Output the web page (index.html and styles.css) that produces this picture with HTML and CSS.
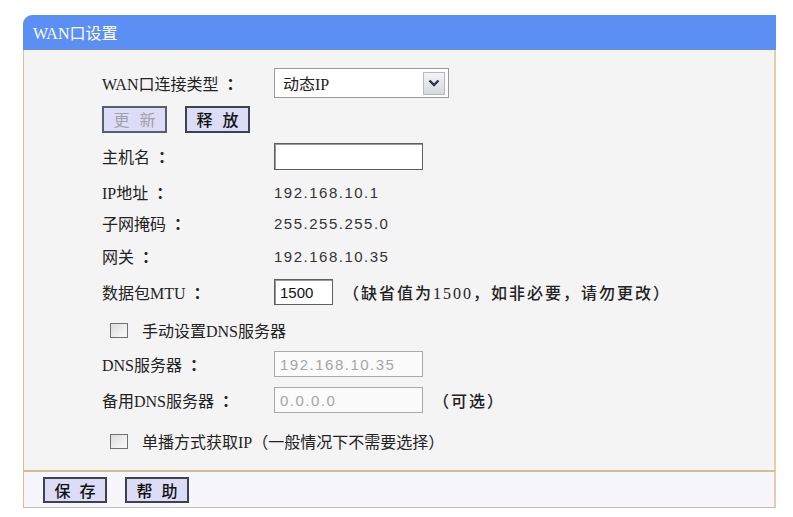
FILE: index.html
```html
<!DOCTYPE html>
<html lang="zh-CN">
<head>
<meta charset="utf-8">
<title>WAN口设置</title>
<link rel="stylesheet" href="styles.css">
</head>
<body>
<div class="panel">
  <div class="panel-head">WAN口设置</div>
  <div class="panel-body">
    <div class="form">
      <div class="label">WAN口连接类型<span class="colon">：</span></div>
      <div class="value">
        <div class="select">
          <span>动态IP</span>
          <span class="select-btn">
            <svg width="12" height="8" viewBox="0 0 12 8"><path d="M1.5 1.5 L6 6 L10.5 1.5" fill="none" stroke="#2a3450" stroke-width="2.4"/></svg>
          </span>
        </div>
      </div>

      <div class="btn-row">
        <span class="btn disabled">更新</span>
        <span class="btn">释放</span>
      </div>

      <div class="label">主机名<span class="colon">：</span></div>
      <div class="value"><span class="input wide"></span></div>

      <div class="label">IP地址<span class="colon">：</span></div>
      <div class="value num">192.168.10.1</div>

      <div class="label">子网掩码<span class="colon">：</span></div>
      <div class="value num">255.255.255.0</div>

      <div class="label">网关<span class="colon">：</span></div>
      <div class="value num">192.168.10.35</div>

      <div class="label">数据包MTU<span class="colon">：</span></div>
      <div class="value">
        <span class="input mtu">1500</span>
        <span class="hint">（缺省值为1500，如非必要，请勿更改）</span>
      </div>

      <div class="check-row">
        <span class="checkbox"></span>
        <span>手动设置DNS服务器</span>
      </div>

      <div class="label">DNS服务器<span class="colon">：</span></div>
      <div class="value"><span class="input wide off">192.168.10.35</span></div>

      <div class="label">备用DNS服务器<span class="colon">：</span></div>
      <div class="value">
        <span class="input wide off">0.0.0.0</span>
        <span class="hint">（可选）</span>
      </div>

      <div class="check-row">
        <span class="checkbox"></span>
        <span>单播方式获取IP（一般情况下不需要选择）</span>
      </div>
    </div>
  </div>
  <div class="panel-foot">
    <span class="btn">保存</span>
    <span class="btn">帮助</span>
  </div>
</div>
</body>
</html>
```

FILE: styles.css
```css
html, body {
  margin: 0;
  padding: 0;
  background: #ffffff;
}

body {
  font-family: "Liberation Serif", "Noto Sans CJK SC", sans-serif;
  font-size: 16px;
  color: #222222;
}

.panel {
  margin: 15px 0 0 23px;
  width: 753px;
}

.panel-head {
  height: 35px;
  box-sizing: border-box;
  background: #5b8ff3;
  border-top-left-radius: 9px;
  border-bottom: 1px solid #6f8fc8;
  color: #ffffff;
  padding-left: 10px;
  display: flex;
  align-items: center;
  font-size: 16px;
}

.panel-body {
  background: #f4f4f4;
  border-left: 1px solid #e0bf8c;
  border-right: 2px solid #e6cfa6;
  padding: 15px 0 11px 78px;
}

.form {
  display: grid;
  grid-template-columns: 172px auto;
  grid-template-rows: 36px 36px 38px 34px 28px 38px 34px 42px 26px 46px 36px;
  align-items: center;
}

.label {
  white-space: nowrap;
}

.colon {
  font-family: "Noto Sans CJK SC", sans-serif;
  font-weight: 700;
  padding-left: 8px;
}

.value {
  display: flex;
  align-items: center;
}

.num {
  font-family: "Liberation Sans", sans-serif;
  font-size: 15px;
  letter-spacing: 1.5px;
  color: #333333;
}

.select {
  width: 175px;
  height: 30px;
  box-sizing: border-box;
  border: 1px solid #9a9a9a;
  background: #ffffff;
  display: flex;
  align-items: center;
  justify-content: space-between;
  padding: 0 3px 0 8px;
}

.select-btn {
  width: 22px;
  height: 23px;
  box-sizing: border-box;
  border: 1px solid #b4b8c4;
  background: linear-gradient(#f4f4f6, #d6d8de);
  display: flex;
  align-items: center;
  justify-content: center;
}

.btn-row {
  grid-column: 1 / 3;
  display: flex;
  gap: 18px;
}

.btn {
  width: 65px;
  height: 27px;
  box-sizing: border-box;
  border: 2px solid #3e4152;
  background: #dcdcf6;
  display: flex;
  align-items: center;
  justify-content: center;
  white-space: nowrap;
  letter-spacing: 10px;
  padding-left: 10px;
  color: #111111;
  font-family: "Noto Sans CJK SC", sans-serif;
  font-size: 16px;
  font-weight: 500;
}

.btn.disabled {
  color: #a0a0a8;
  border-color: #5a5c70;
  font-weight: 400;
}

.input {
  height: 26px;
  box-sizing: border-box;
  background: #ffffff;
  border: 1px solid #5e5e5e;
  box-shadow: inset 1px 1px 0 #9a9a9a;
  display: flex;
  align-items: center;
  padding-left: 5px;
  font-family: "Liberation Sans", sans-serif;
  font-size: 15px;
  color: #111111;
}

.input.wide {
  width: 149px;
  height: 27px;
}

.input.mtu {
  width: 59px;
}

.input.off {
  height: 26px;
  border-color: #a9a9a9;
  box-shadow: none;
  background: #fbfbfb;
  color: #a6a6a6;
  letter-spacing: 1.5px;
}

.hint {
  margin-left: 10px;
  white-space: nowrap;
  letter-spacing: 2px;
  font-weight: 500;
}

.check-row {
  grid-column: 1 / 3;
  display: flex;
  align-items: center;
  gap: 14px;
  padding-left: 8px;
}

.checkbox {
  width: 18px;
  height: 15px;
  box-sizing: border-box;
  border: 1px solid #707070;
  background: linear-gradient(135deg, #dcdcdc, #fafafa);
}

.panel-foot {
  height: 38px;
  box-sizing: border-box;
  background: #f7f6fc;
  border-top: 2px solid #d2bd95;
  border-bottom: 1px solid #c4bcac;
  border-left: 1px solid #e0bf8c;
  border-right: 2px solid #e6cfa6;
  display: flex;
  align-items: center;
  gap: 18px;
  padding-left: 19px;
}

.panel-foot .btn {
  width: 64px;
  height: 26px;
  letter-spacing: 9px;
  padding-left: 9px;
}
```
